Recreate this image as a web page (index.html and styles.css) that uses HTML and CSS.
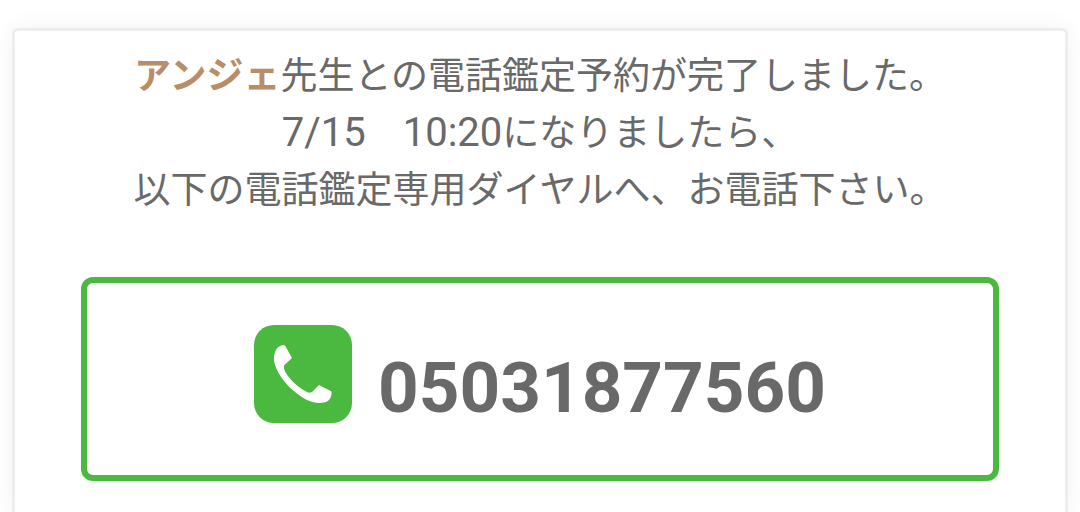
FILE: index.html
```html
<!DOCTYPE html>
<html lang="ja">
<head>
<meta charset="utf-8">
<meta name="viewport" content="width=device-width, initial-scale=1">
<title>電話鑑定予約</title>
<link rel="stylesheet" href="styles.css">
</head>
<body>
<main class="card">
  <p class="message"><strong class="name">アンジェ</strong>先生との電話鑑定予約が完了しました。<br><span class="time">7/15</span>　<span class="time">10:20</span>になりましたら、<br>以下の電話鑑定専用ダイヤルへ、お電話下さい。</p>
  <a class="dial" href="tel:05031877560">
    <svg class="dial-icon" viewBox="0 0 98 98" aria-hidden="true">
      <rect width="98" height="98" rx="20" fill="#4bb840"/>
      <path fill="#fff" d="M31 20.500L38 33L30.500 40C29 42 30.500 45 32 48C37 56 45 63 53 67C56 68.500 57.500 67.500 59 66L65 60L77.500 66.500C78 71 76 75 73 76.500C67 79 60 78 53 75C38 67 24 52 20.500 38C19 31 21 23 26 21C28 20 29 20 31 20.500Z"/>
    </svg>
    <span class="dial-number">05031877560</span>
  </a>
</main>
</body>
</html>
```

FILE: styles.css
```css
* {
  box-sizing: border-box;
}

body {
  margin: 0;
  padding: 28px 12px 0;
  background: #fff;
  color: #696969;
  font-family: Roboto, "Noto Sans CJK JP", sans-serif;
}

.card {
  padding: 17px 66px 32px;
  background: #fff;
  border: 3px solid #ededed;
  border-radius: 6px;
  box-shadow: 0 0 24px rgba(0, 0, 0, 0.06);
}

.message {
  margin: 0 0 58px;
  font-size: 37px;
  font-weight: 400;
  line-height: 57px;
  text-align: center;
}

.name {
  color: #b88d67;
  font-weight: 700;
}

.time {
  font-size: 40px;
  line-height: 1;
}

.dial {
  display: flex;
  justify-content: center;
  align-items: flex-start;
  gap: 26px;
  padding: 42px 24px 46px;
  border: 6px solid #4bb840;
  border-radius: 12px;
  color: #696969;
  text-decoration: none;
}

.dial-icon {
  flex: none;
  width: 98px;
  height: 98px;
}

.dial-number {
  padding-top: 22px;
  font-size: 71px;
  font-weight: 700;
  line-height: 82px;
}
```
